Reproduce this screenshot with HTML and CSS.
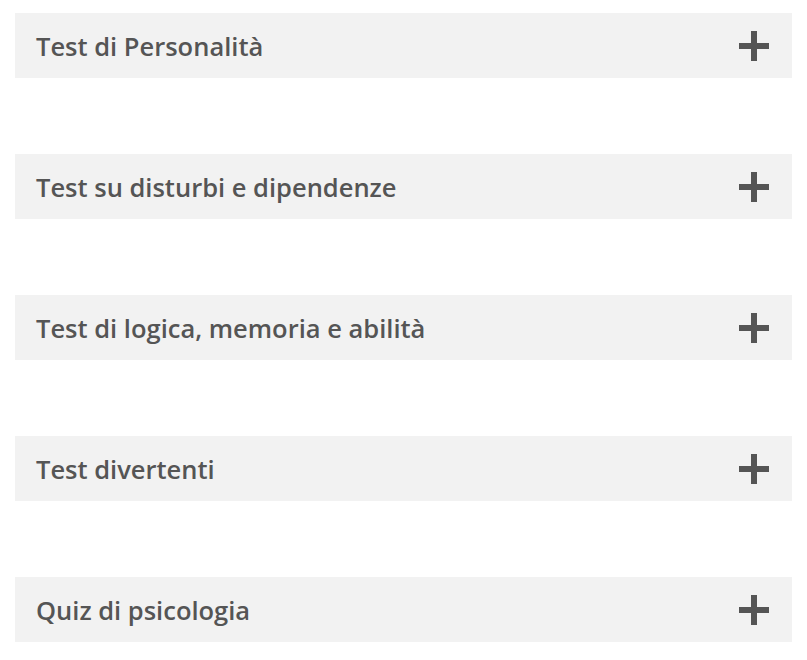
FILE: index.html
```html
<!DOCTYPE html>
<html>
<head>
<link rel="stylesheet" href="styles.css">
</head>
<body>
<div class="accordion">
  <div class="acc-item">
    <div class="acc-title">Test di Personalità</div>
    <span class="acc-plus"></span>
  </div>
  <div class="acc-item">
    <div class="acc-title">Test su disturbi e dipendenze</div>
    <span class="acc-plus"></span>
  </div>
  <div class="acc-item">
    <div class="acc-title">Test di logica, memoria e abilità</div>
    <span class="acc-plus"></span>
  </div>
  <div class="acc-item">
    <div class="acc-title">Test divertenti</div>
    <span class="acc-plus"></span>
  </div>
  <div class="acc-item">
    <div class="acc-title">Quiz di psicologia</div>
    <span class="acc-plus"></span>
  </div>
</div>
</body>
</html>
```

FILE: styles.css
```css
* {
  box-sizing: border-box;
}

body {
  margin: 0;
  background: #fff;
  font-family: "Open Sans", Lato, sans-serif;
}

.accordion {
  padding: 13px 15px;
  display: flex;
  flex-direction: column;
  gap: 76px;
}

.acc-item {
  background-color: #f2f2f2;
  height: 65px;
  display: flex;
  align-items: center;
  justify-content: space-between;
  padding: 0 23px 0 21px;
}

.acc-title {
  color: #555;
  font-size: 25.5px;
  font-weight: 600;
}

.acc-plus {
  position: relative;
  width: 30px;
  height: 30px;
}

.acc-plus::before,
.acc-plus::after {
  content: "";
  position: absolute;
  background-color: #555;
}

.acc-plus::before {
  left: 0;
  right: 0;
  top: 12px;
  height: 6px;
}

.acc-plus::after {
  top: 0;
  bottom: 0;
  left: 12px;
  width: 6px;
}
```
